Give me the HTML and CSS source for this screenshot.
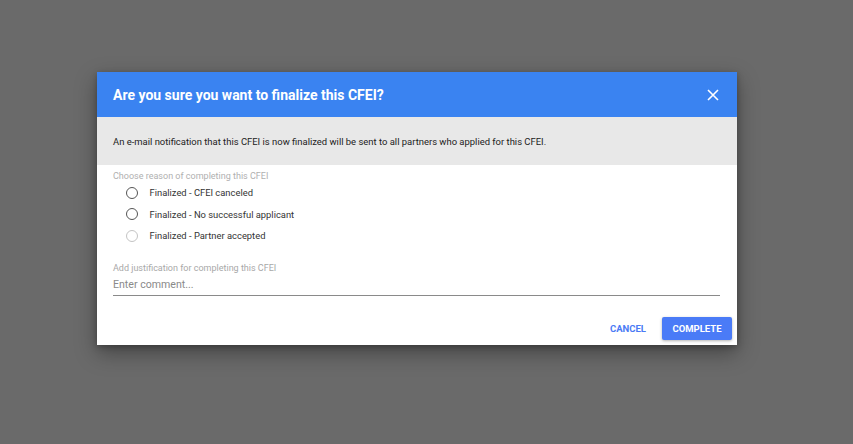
FILE: index.html
```html
<!DOCTYPE html>
<html>
<head>
<meta charset="utf-8">
<link rel="stylesheet" href="styles.css">
</head>
<body>
<div class="dialog">
  <div class="header">
    <h1 class="title">Are you sure you want to finalize this CFEI?</h1>
    <svg class="close" width="12" height="12" viewBox="0 0 12 12"><path d="M1 1 L11 11 M11 1 L1 11" stroke="#fff" stroke-width="1.6"/></svg>
  </div>
  <div class="notice">An e-mail notification that this CFEI is now finalized will be sent to all partners who applied for this CFEI.</div>
  <div class="content">
    <div class="legend">Choose reason of completing this CFEI</div>
    <div class="radios">
      <label class="radio"><span class="circle"></span><span>Finalized - CFEI canceled</span></label>
      <label class="radio"><span class="circle"></span><span>Finalized - No successful applicant</span></label>
      <label class="radio"><span class="circle disabled"></span><span>Finalized - Partner accepted</span></label>
    </div>
    <div class="field">
      <div class="field-label">Add justification for completing this CFEI</div>
      <div class="input">Enter comment...</div>
    </div>
  </div>
  <div class="actions">
    <button class="btn cancel">CANCEL</button>
    <button class="btn complete">COMPLETE</button>
  </div>
</div>
</body>
</html>
```

FILE: styles.css
```css
html, body {
  margin: 0;
  padding: 0;
}
body {
  background: #6a6a6a;
  height: 444px;
  font-family: Roboto, "Liberation Sans", sans-serif;
  overflow: hidden;
}
.dialog {
  margin: 72px 0 0 97px;
  width: 640px;
  height: 273px;
  background: #fff;
  box-shadow: 0 8px 20px rgba(0,0,0,0.35), 0 2px 6px rgba(0,0,0,0.25);
  display: flex;
  flex-direction: column;
}
.header {
  height: 45px;
  background: #3a83f1;
  display: flex;
  align-items: center;
  justify-content: space-between;
  padding: 0 18px 0 16px;
}
.title {
  margin: 0;
  color: #fff;
  font-size: 14px;
  font-weight: 700;
}
.close {
  display: block;
  width: 12px;
  height: 12px;
}
.notice {
  height: 48px;
  background: #e8e8e8;
  display: flex;
  align-items: center;
  padding: 0 16px;
  font-size: 9.45px;
  color: #222;
}
.content {
  padding: 6px 16px 0 16px;
}
.legend {
  font-size: 9px;
  color: #b0b0b0;
  line-height: 11px;
}
.radios {
  display: flex;
  flex-direction: column;
  padding-top: 0;
}
.radio {
  display: flex;
  align-items: center;
  height: 21.5px;
  font-size: 9.4px;
  color: #333;
  gap: 12px;
  padding-left: 12.5px;
}
.circle {
  width: 10px;
  height: 10px;
  border: 1.6px solid #555;
  border-radius: 50%;
  flex: none;
}
.circle.disabled {
  border-color: #c4c4c4;
}
.field {
  margin-top: 16px;
  width: 607px;
}
.field-label {
  font-size: 9px;
  color: #a8a8a8;
  line-height: 11px;
}
.input {
  font-size: 10.6px;
  color: #8a8a8a;
  height: 18px;
  line-height: 16px;
  margin-top: 3px;
  border-bottom: 1px solid #8a8a8a;
}
.actions {
  margin-top: auto;
  display: flex;
  justify-content: flex-end;
  align-items: center;
  gap: 16px;
  padding: 0 5px 5px 0;
}
.btn {
  font-family: Roboto, "Liberation Sans", sans-serif;
  font-size: 9.5px;
  font-weight: 700;
  border: none;
  background: none;
  padding: 0;
  cursor: pointer;
}
.cancel {
  color: #4a7af5;
}
.complete {
  background: #4a7bf7;
  color: #fff;
  width: 70px;
  height: 23px;
  border-radius: 2px;
  box-shadow: 0 1px 3px rgba(0,0,0,0.3);
}
```
